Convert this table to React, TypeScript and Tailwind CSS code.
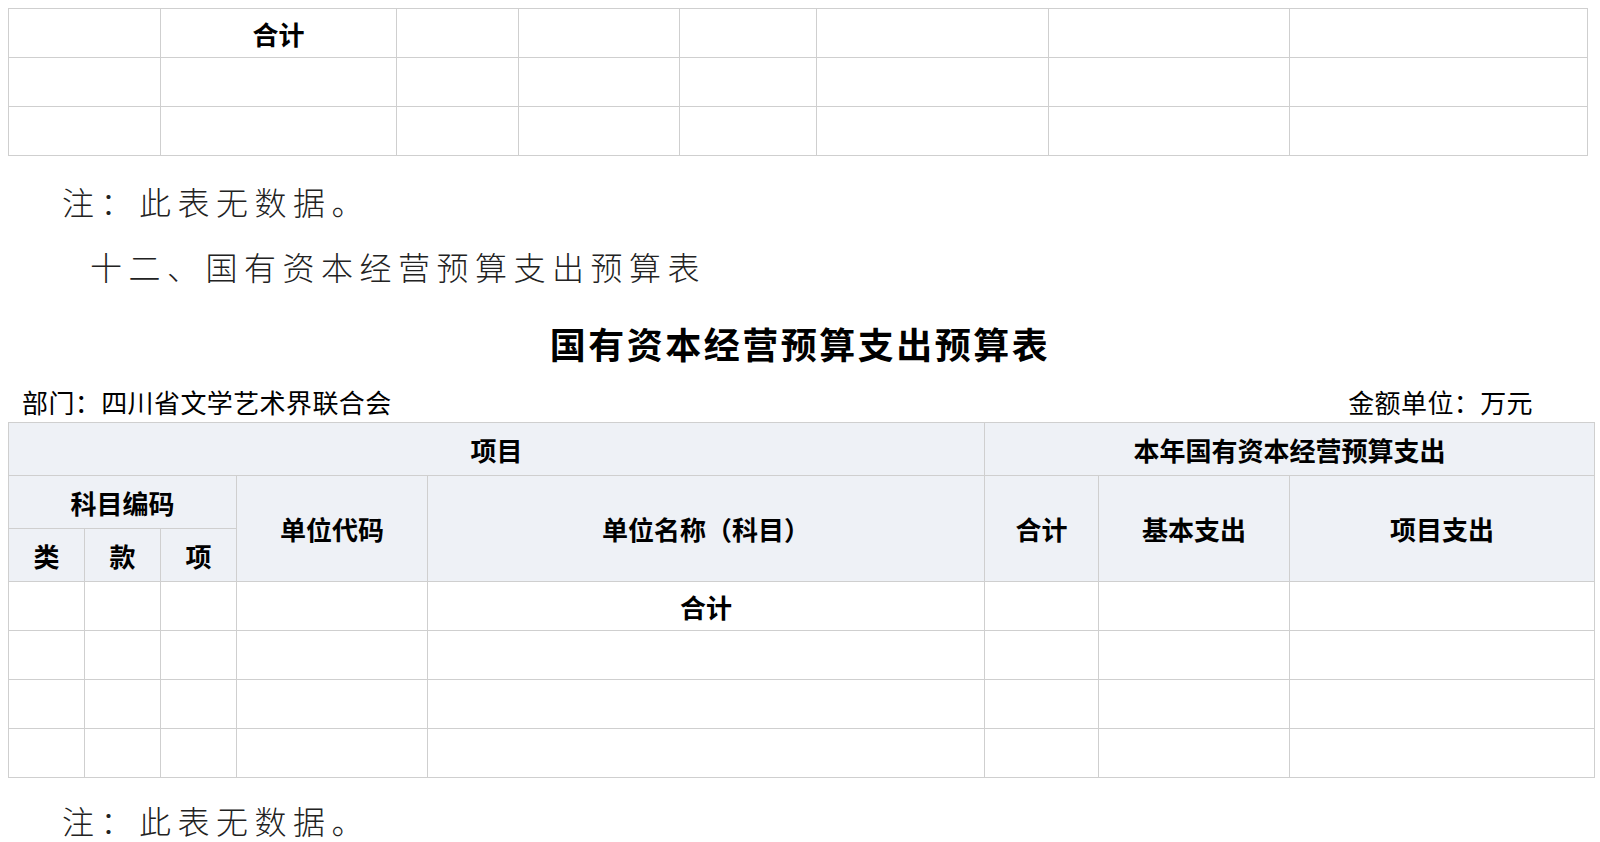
import React from "react";

const font = { fontFamily: '"Noto Sans CJK SC", "Noto Sans", sans-serif' };

const topCols = [152, 236, 122, 161, 137, 232, 241, 298];
const bottomCols = [76, 76, 76, 191, 557, 114, 191, 305];

const cell = "border border-[#cfcfcf] text-center align-middle p-0";
const head = "border border-[#cfcfcf] bg-[#eef1f6] text-center align-middle font-bold text-[26px] text-black p-0";

const TopTable = () => (
  <table className="border-collapse table-fixed ml-[8px] w-[1579px]">
    <colgroup>
      {topCols.map((w, i) => (
        <col key={i} style={{ width: w }} />
      ))}
    </colgroup>
    <tbody>
      {[0, 1, 2].map((r) => (
        <tr key={r} className="h-[49px]">
          {topCols.map((_, c) => (
            <td key={c} className={`${cell} font-bold text-[26px] text-black`}>
              {r === 0 && c === 1 ? "合计" : ""}
            </td>
          ))}
        </tr>
      ))}
    </tbody>
  </table>
);

const BottomTable = () => (
  <table className="border-collapse table-fixed ml-[8px] w-[1586px]">
    <colgroup>
      {bottomCols.map((w, i) => (
        <col key={i} style={{ width: w }} />
      ))}
    </colgroup>
    <thead>
      <tr className="h-[53px]">
        <th colSpan={5} className={head}>项目</th>
        <th colSpan={3} className={head}>本年国有资本经营预算支出</th>
      </tr>
      <tr className="h-[53px]">
        <th colSpan={3} className={head}>科目编码</th>
        <th rowSpan={2} className={head}>单位代码</th>
        <th rowSpan={2} className={head}>单位名称（科目）</th>
        <th rowSpan={2} className={head}>合计</th>
        <th rowSpan={2} className={head}>基本支出</th>
        <th rowSpan={2} className={head}>项目支出</th>
      </tr>
      <tr className="h-[53px]">
        <th className={head}>类</th>
        <th className={head}>款</th>
        <th className={head}>项</th>
      </tr>
    </thead>
    <tbody>
      {[0, 1, 2, 3].map((r) => (
        <tr key={r} className="h-[49px]">
          {bottomCols.map((_, c) => (
            <td key={c} className={`${cell} font-bold text-[26px] text-black`}>
              {r === 0 && c === 4 ? "合计" : ""}
            </td>
          ))}
        </tr>
      ))}
    </tbody>
  </table>
);

export default function App() {
  return (
    <div className="w-[1600px] h-[842px] bg-white overflow-hidden pt-[8px] text-black" style={font}>
      <TopTable />
      <p className="mt-[25px] pl-[62px] text-[32px] leading-[40px] tracking-[6.5px] font-light text-[#222]">
        注：此表无数据。
      </p>
      <p className="mt-[25px] pl-[90px] text-[32px] leading-[40px] tracking-[6.5px] font-light text-[#222]">
        十二、国有资本经营预算支出预算表
      </p>
      <h1 className="mt-[33px] text-center text-[36px] leading-[48px] tracking-[2.5px] font-bold">
        国有资本经营预算支出预算表
      </h1>
      <div className="mt-[19px] mb-[4px] flex justify-between items-center pl-[22px] pr-[67px] text-[26px] leading-[32px] tracking-[0.4px]">
        <span>部门：四川省文学艺术界联合会</span>
        <span>金额单位：万元</span>
      </div>
      <BottomTable />
      <p className="mt-[24px] pl-[62px] text-[32px] leading-[36px] tracking-[6.5px] font-light text-[#222]">
        注：此表无数据。
      </p>
    </div>
  );
}
